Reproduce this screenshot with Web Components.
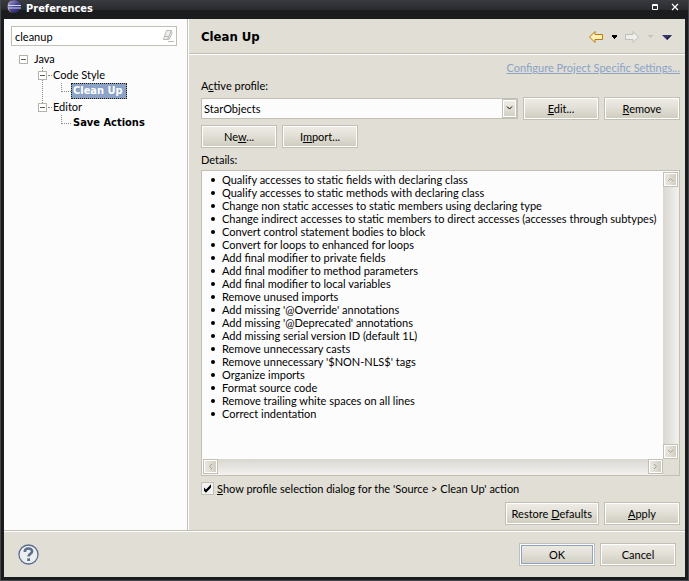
<!DOCTYPE html>
<html lang="en">
<head>
<meta charset="utf-8">
<title>Preferences</title>
<style>
  html, body { height: 100%; margin: 0; }
  body {
    --face: #e0ded5; --edge: #c2bfb5; --paper: #fcfcfc; --accent: #8ba3c7;
    --strong: "DejaVu Sans Condensed", "DejaVu Sans", sans-serif;
    font: 11px/13px Lato, "DejaVu Sans Condensed", sans-serif;
    color: #000; background: #1b1c1e;
  }
</style>
</head>
<body>
<pref-window>
  <title-bar slot="title">Preferences</title-bar>
  <nav-pane slot="nav"></nav-pane>
  <page-header slot="header">Clean Up</page-header>
  <cleanup-page slot="page"></cleanup-page>
  <dialog-footer slot="footer"></dialog-footer>
</pref-window>

<script>
const define = (name, html, setup) => {
  const template = document.createElement('template');
  template.innerHTML = '<style>:host,*{box-sizing:border-box}</style>' + html;
  customElements.define(name, class extends HTMLElement {
    constructor() {
      super();
      this.attachShadow({ mode: 'open' }).append(template.content.cloneNode(true));
    }
    connectedCallback() { if (setup) setup(this, this.shadowRoot); }
  });
};

define('push-button', `
<style>
  :host { display: inline-flex; min-width: 76px; height: 23px; }
  button { flex: 1; font: inherit; color: inherit; padding: 0 6px; white-space: nowrap;
    border: 1px solid var(--edge); border-radius: 0;
    background: linear-gradient(#eeece5, #e2e0d7 45%, #cecbbe);
    box-shadow: inset 0 0 0 1px #fff; }
  :host([default]) button { box-shadow: inset 0 0 0 1px #fff, inset 0 0 0 2px var(--accent); }
</style>
<button type="button"><slot></slot></button>`);

define('scroll-button', `
<style>
  :host { display: block; width: 15px; height: 15px; flex: none; }
  button { display: block; width: 100%; height: 100%; padding: 0; border: 1px solid var(--edge);
    background: linear-gradient(90deg, #eceae3, #cfccc0); box-shadow: inset 0 0 0 1px #fff; }
  svg { display: block; width: 13px; height: 13px; }
  path { fill: none; stroke: #a5a297; }
  :host([dir-to=down]) svg { transform: rotate(180deg); }
  :host([dir-to=left]) svg { transform: rotate(-90deg); }
  :host([dir-to=right]) svg { transform: rotate(90deg); }
</style>
<button type="button"><svg viewBox="0 0 13 13"><path d="M4 8 6.500 5.500 9 8"/></svg></button>`,
(el, root) => root.querySelector('button').setAttribute('aria-label', 'Scroll ' + el.getAttribute('dir-to')));

define('title-bar', `
<style>
  :host { display: flex; align-items: flex-start; height: 19px; padding: 0 3px 0 6px; color: #fff;
    background: linear-gradient(#383b40, #292a2e 10px, #1b1c1e 10px); }
  .logo { width: 14px; height: 14px; margin-right: 5px; }
  .name { flex: 1; padding-top: 2px; font-family: var(--strong); font-weight: bold; }
  button { width: 20px; height: 14px; padding: 0; border: 0; background: none; color: inherit; }
  button svg { display: block; margin: 0 auto; }
</style>
<svg class="logo" viewBox="0 0 14 14" aria-hidden="true">
  <defs><linearGradient id="g" x2="1" y2="1"><stop stop-color="#a9a4d8"/><stop offset=".5" stop-color="#4a4590"/><stop offset="1" stop-color="#1f1a5a"/></linearGradient></defs>
  <path d="M5 0A7 7 0 0 0 5 13 8 8 0 0 1 5 0Z" fill="#d8a9b8"/>
  <circle cx="7.500" cy="6.500" r="6.300" fill="url(#g)"/>
  <path d="M1 5.500H14M1 8H14" stroke="#c9d6f4"/>
</svg>
<span class="name"><slot></slot></span>
<button type="button" aria-label="Maximize"><svg width="8" height="14"><path d="M1.500 4.500h5v5h-5zM1 5.500h6" fill="none" stroke="#fff"/></svg></button>
<button type="button" aria-label="Close"><svg width="8" height="14"><path d="M1 4 7 10M7 4 1 10" stroke="#fff" stroke-width="1.200"/></svg></button>`);

define('tree-node', `
<style>
  :host { display: block; position: relative; }
  .row { display: flex; align-items: center; height: 16px; white-space: nowrap; }
  .box { position: relative; width: 9px; height: 9px; padding: 0; border: 1px solid #b5b2a8; background: linear-gradient(#5b5a55, #5b5a55) center / 5px 1px no-repeat #fff; }
  .stem { width: 4px; border-top: 1px dotted #8c8a82; margin-left: 1px; }
  .kids { padding-left: 19px; }
  .label { padding: 0 1px; height: 16px; line-height: 16px; }
  :host([root]) > .row .stem { border-color: transparent; }
  :host([leaf]) .box, :host([leaf]) .kids { display: none; }
  :host([leaf]) .row::before { content: ""; width: 9px; height: 8px; margin: 0 0 8px 4px;
    border: dotted #8c8a82; border-width: 0 0 1px 1px; }
  :host([leaf]) .stem { display: none; }
  :host([leaf]) .label { font-family: var(--strong); font-weight: bold; padding: 0 4px 0 2px; }
  :host([selected]) .label { color: #fff; background: var(--accent); outline: 1px dotted #2b1b00; outline-offset: -1px; }
  :host([joined])::before { content: ""; position: absolute; left: 4px; top: 0; bottom: -4px; border-left: 1px dotted #8c8a82; }
</style>
<div class="row"><button class="box" type="button" aria-label="Collapse"></button><span class="stem"></span><span class="label"></span></div>
<div class="kids"><slot></slot></div>`,
(el, root) => { root.querySelector('.label').textContent = el.getAttribute('label'); });

define('nav-pane', `
<style>
  :host { display: block; background: var(--paper); padding: 7px 10px 7px 7px; }
  .search { display: flex; align-items: center; height: 20px; border: 1px solid var(--edge); background: #fff; }
  input { flex: 1; min-width: 0; font: inherit; border: 0; outline: 0; padding: 0 3px; background: none; color: inherit; }
  button { border: 0; padding: 0; background: none; width: 16px; height: 16px; }
  svg { display: block; }
  .tree { margin: 5px 0 0 8px; }
</style>
<div class="search">
  <input type="text" value="cleanup" aria-label="Filter">
  <button type="button" aria-label="Clear"><svg width="16" height="16"><path d="M6.500 2.500h5l-4 9h-4zM4.500 8.500h4M11.500 2.500l.5 3-3 6h-2" fill="#eee" stroke="#bbb9b4"/><path d="M8 13.500h6" stroke="#bbb9b4"/></svg></button>
</div>
<div class="tree">
  <tree-node label="Java" root>
    <tree-node label="Code Style" joined><tree-node label="Clean Up" leaf selected></tree-node></tree-node>
    <tree-node label="Editor"><tree-node label="Save Actions" leaf></tree-node></tree-node>
  </tree-node>
</div>`);

define('page-header', `
<style>
  :host { display: flex; align-items: center; height: 36px; padding: 1px 11px 0 12px;
    border-bottom: 1px solid #fff; box-shadow: inset 0 -1px var(--edge); }
  h1 { flex: 1; margin: 0; font-family: var(--strong); font-size: 13px; line-height: 16px; }
  button { border: 0; padding: 0; background: none; display: block; }
  svg { display: block; }
  nav { display: flex; align-items: center; }
</style>
<h1><slot></slot></h1>
<nav aria-label="History">
  <button type="button" aria-label="Back"><svg width="16" height="16"><path d="M1.500 8 7 2.500V5.500H14.500V10.500H7V13.500Z" fill="#fdf0b4" stroke="#b87a14"/></svg></button>
  <button type="button" aria-label="Back history"><svg width="20" height="16"><path d="M8 6h5v1H8zM8 7h5v1H8zM9 8h3v1H9zM10 9h1v1h-1z"/></svg></button>
  <button type="button" aria-label="Forward"><svg width="16" height="16"><path d="M14.500 8 9 2.500V5.500H1.500V10.500H9V13.500Z" fill="#efeeea" stroke="#c0beb8"/></svg></button>
  <button type="button" aria-label="Forward history"><svg width="20" height="16"><path d="M8 6h5v1H8zM9 7h3v1H9zM10 8h1v1h-1z" fill="#c6c4bc"/></svg></button>
  <button type="button" aria-label="Menu"><svg width="14" height="16"><path d="M2 6H12L7 11Z" fill="#35346b"/><path d="M12 6 7 11V9Z" fill="#15142e"/></svg></button>
</nav>`);

define('combo-box', `
<style>
  :host { display: block; position: relative; height: 21px; }
  select { appearance: none; width: 100%; height: 100%; font: inherit; color: inherit; padding: 0 20px 0 2px;
    border: 1px solid var(--edge); border-radius: 0; background: var(--paper); }
  svg { position: absolute; right: 1px; top: 1px; pointer-events: none; }
</style>
<select aria-label="Active profile"><option>StarObjects</option></select>
<svg width="15" height="19"><defs><linearGradient id="f" x2="0" y2="1"><stop stop-color="#efede7"/><stop offset="1" stop-color="#d3d0c5"/></linearGradient></defs>
  <path d="M.5.5h14v18H.5z" fill="#fff" stroke="#c2bfb5"/><path d="M2 2h11v15H2z" fill="url(#f)"/><path d="M5 7.500 7.500 10 10 7.500" fill="none" stroke="#000"/></svg>`);

define('check-option', `
<style>
  :host { display: block; }
  label { display: flex; align-items: center; gap: 3px; }
  input { appearance: none; margin: 0; width: 13px; height: 13px; border: 1px solid var(--edge); background: #f3f2f2; display: grid; }
  input:checked::before { content: ""; background: #000; clip-path: polygon(18% 40%, 36% 58%, 82% 12%, 82% 42%, 36% 88%, 18% 70%); }
</style>
<label><input type="checkbox" checked><span><slot></slot></span></label>`);

define('detail-list', `
<style>
  :host { display: grid; grid-template: minmax(0, 1fr) 16px / minmax(0, 1fr) 16px; border: 1px solid var(--edge);
    background: var(--paper); padding: 1px 0 0 1px; }
  ul { margin: 0; padding: 1px 0 0 19px; overflow: hidden; white-space: nowrap; list-style: none; }
  li { position: relative; }
  li::before { content: ""; position: absolute; left: -11px; top: 5px; width: 4px; height: 4px; border-radius: 2px; background: #000; }
  .v, .h { display: flex; justify-content: space-between; }
  .v { flex-direction: column; background: linear-gradient(90deg, #d9d7cf, #f3f2f1); }
  .h { background: linear-gradient(#d9d7cf, #f3f2f1); }
  .corner { background: var(--face); }
</style>
<ul></ul>
<div class="v"><scroll-button dir-to="up"></scroll-button><scroll-button dir-to="down"></scroll-button></div>
<div class="h"><scroll-button dir-to="left"></scroll-button><scroll-button dir-to="right"></scroll-button></div>
<div class="corner"></div>`,
(el, root) => root.querySelector('ul').replaceChildren(...[
  'Qualify accesses to static fields with declaring class',
  'Qualify accesses to static methods with declaring class',
  'Change non static accesses to static members using declaring type',
  'Change indirect accesses to static members to direct accesses (accesses through subtypes)',
  'Convert control statement bodies to block',
  'Convert for loops to enhanced for loops',
  'Add final modifier to private fields',
  'Add final modifier to method parameters',
  'Add final modifier to local variables',
  'Remove unused imports',
  "Add missing '@Override' annotations",
  "Add missing '@Deprecated' annotations",
  'Add missing serial version ID (default 1L)',
  'Remove unnecessary casts',
  "Remove unnecessary '$NON-NLS$' tags",
  'Organize imports',
  'Format source code',
  'Remove trailing white spaces on all lines',
  'Correct indentation'
].map(text => Object.assign(document.createElement('li'), { textContent: text }))));

define('cleanup-page', `
<style>
  :host { display: flex; flex-direction: column; padding: 6px 5px 5px 12px; min-height: 0; }
  a { align-self: flex-end; color: var(--accent); }
  .label { margin-top: 5px; }
  .row { display: flex; gap: 5px; align-items: center; margin-top: 5px; }
  combo-box { flex: 1; }
  detail-list { flex: 1; min-height: 60px; margin: 4px 0 6px; }
  .end { justify-content: flex-end; margin-top: 7px; }
</style>
<a href="#">Configure Project Specific Settings...</a>
<div class="label">A<u>c</u>tive profile:</div>
<div class="row"><combo-box></combo-box><push-button><u>E</u>dit...</push-button><push-button><u>R</u>emove</push-button></div>
<div class="row"><push-button>Ne<u>w</u>...</push-button><push-button>I<u>m</u>port...</push-button></div>
<div class="label">Details:</div>
<detail-list></detail-list>
<check-option><u>S</u>how profile selection dialog for the 'Source &gt; Clean Up' action</check-option>
<div class="row end"><push-button>Restore <u>D</u>efaults</push-button><push-button><u>A</u>pply</push-button></div>`);

define('dialog-footer', `
<style>
  :host { display: flex; align-items: center; gap: 5px; height: 47px; padding: 1px 9px 0 14px;
    border-top: 1px solid var(--edge); box-shadow: inset 0 1px #fff; }
  .help { border: 0; padding: 0; background: none; margin-right: auto; }
  svg { display: block; }
</style>
<button class="help" type="button" aria-label="Help"><svg width="21" height="21" viewBox="0 0 21 21"><circle cx="10.500" cy="10.500" r="9.500" fill="#edeef0" stroke="#5d6e8f" stroke-width="1.300"/><path d="M6.800 8C6.800 3.300 14.300 3.500 14.100 7.400 14 9.800 10.600 9.800 10.600 12.600" fill="none" stroke="#5d6e8f" stroke-width="2.600"/><path d="M9.200 14.300h2.800v2.700H9.200z" fill="#5d6e8f"/></svg></button>
<push-button default>OK</push-button><push-button>Cancel</push-button>`);

define('pref-window', `
<style>
  :host { display: grid; height: 100%; grid-template-rows: auto minmax(0, 1fr) auto;
    border: solid #1b1c1e; border-width: 0 4px 4px; position: relative; background: var(--face);
    background-clip: padding-box; }
  :host::after { content: ""; position: absolute; inset: 0 -4px -4px; border: 1px solid #45464a; border-top: 0; pointer-events: none; }
  .title { margin: 0 -3px; }
  .body { display: grid; grid-template-columns: 183px minmax(0, 1fr); min-height: 0; }
  .main { display: grid; grid-template-rows: auto minmax(0, 1fr); min-height: 0;
    border-left: 1px solid var(--edge); box-shadow: inset 1px 0 #fff; padding-left: 1px; }
</style>
<div class="title"><slot name="title"></slot></div>
<div class="body"><slot name="nav"></slot><div class="main"><slot name="header"></slot><slot name="page"></slot></div></div>
<slot name="footer"></slot>`);
</script>
</body>
</html>
